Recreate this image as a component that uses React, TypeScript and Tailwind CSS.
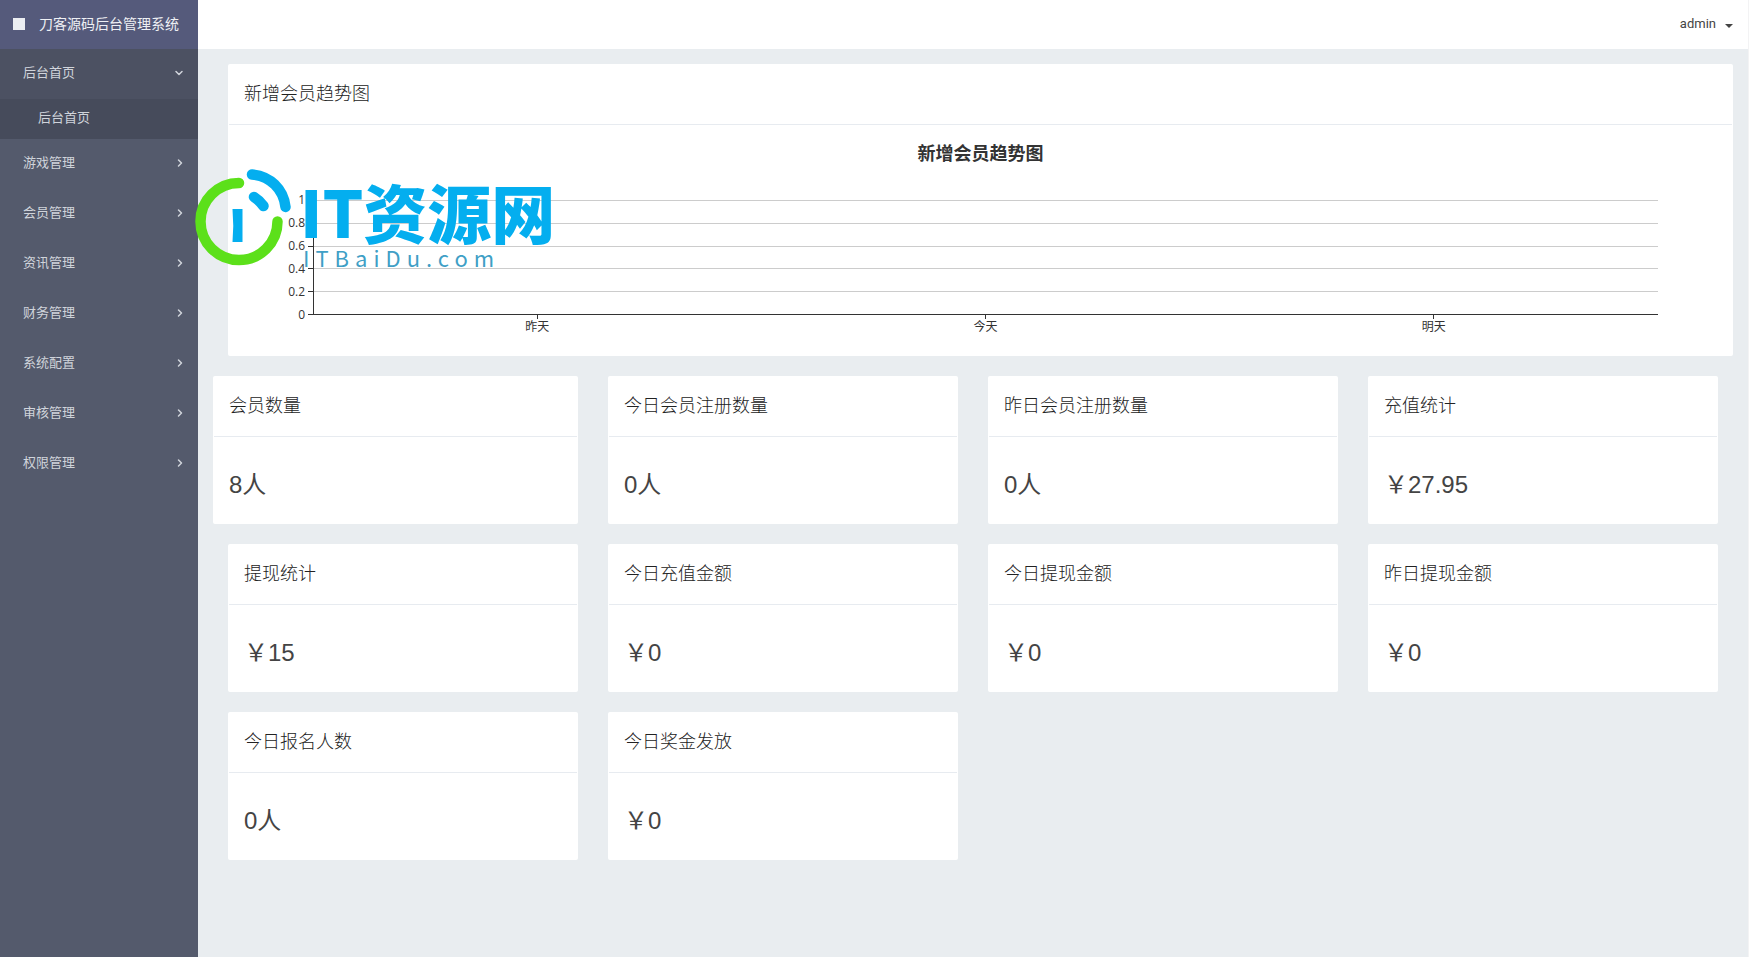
import { ChevronDown, ChevronRight } from "lucide-react";

const menu = ["游戏管理", "会员管理", "资讯管理", "财务管理", "系统配置", "审核管理", "权限管理"];

const stats = [
  { title: "会员数量", value: "8人" },
  { title: "今日会员注册数量", value: "0人" },
  { title: "昨日会员注册数量", value: "0人" },
  { title: "充值统计", value: "￥27.95" },
  { title: "提现统计", value: "￥15" },
  { title: "今日充值金额", value: "￥0" },
  { title: "今日提现金额", value: "￥0" },
  { title: "昨日提现金额", value: "￥0" },
  { title: "今日报名人数", value: "0人" },
  { title: "今日奖金发放", value: "￥0" },
];

const levels = ["1", "0.8", "0.6", "0.4", "0.2", "0"];
const days = ["昨天", "今天", "明天"];

function Sidebar() {
  return (
    <aside className="w-[198px] shrink-0 bg-[#545a6c] text-[13px] text-[#d0d4db]">
      <a href="#home" className="flex h-[49px] items-center gap-[14px] bg-[#555a7b] pb-0.5 pl-[13px] text-sm text-[#eef0f4]">
        <span className="size-3 bg-[#eceef2]" />
        刀客源码后台管理系统
      </a>
      <nav>
        <button type="button" className="flex h-[50px] w-full items-center justify-between bg-[#4c5162] pr-[13px] pb-0.5 pl-[23px]">
          后台首页
          <ChevronDown className="size-3" strokeWidth={3} />
        </button>
        <a href="#dashboard" className="flex h-10 items-center bg-[#464b5b] pb-0.5 pl-[38px]">
          后台首页
        </a>
        {menu.map((label) => (
          <button key={label} type="button" className="flex h-[50px] w-full items-center justify-between pr-3 pb-0.5 pl-[23px]">
            {label}
            <ChevronRight className="size-3" strokeWidth={3} />
          </button>
        ))}
      </nav>
    </aside>
  );
}

function Logo() {
  return (
    <div className="pointer-events-none absolute top-24 left-[-38px] flex items-start font-['Noto_Sans_CJK_SC',sans-serif]">
      <svg viewBox="0 0 110 112" className="h-[112px] w-[110px] shrink-0" fill="none" strokeWidth="10.500" strokeLinecap="round">
        <path d="M49 23 A38.500 38.500 0 1 0 87.500 61.500" stroke="#5ce01a" />
        <path d="M62 14.500 C80 16 93.500 29 95.500 47" stroke="#04aeef" />
        <path d="M64 37 Q69 40 73.500 46" stroke="#04aeef" />
        <path d="M42.500 49 H52.500 V82 H42.500 Q44 66 42.500 49 Z" fill="#04aeef" />
      </svg>
      <div className="pt-[18px] whitespace-nowrap">
        <p className="text-[64px] leading-[64px] font-black text-[#04aeef]">IT资源网</p>
        <p className="mt-[3px] pl-[3px] text-[22px] leading-6 tracking-[6px] text-[#3f9fc6]">ITBaiDu.com</p>
      </div>
    </div>
  );
}

function TrendChart() {
  return (
    <figure className="px-[15px] pt-[17px] pb-[21px] text-[#333]">
      <figcaption className="text-center text-lg leading-6 font-bold">新增会员趋势图</figcaption>
      <div className="mt-[34px] mr-[60px] flex text-xs">
        <div className="-my-2 flex w-[62px] flex-col justify-between text-right font-['Open_Sans',sans-serif] leading-4">
          {levels.map((level) => (
            <span key={level}>{level}</span>
          ))}
        </div>
        <div className="ml-[3px] flex w-[5px] flex-col justify-between">
          {levels.map((level) => (
            <span key={level} className="h-px bg-[#333]" />
          ))}
        </div>
        <div className="flex h-[115px] flex-1 flex-col justify-between border-l border-[#333]">
          {levels.map((level) => (
            <span key={level} className={level === "0" ? "h-px bg-[#333]" : "h-px bg-[#ccc]"} />
          ))}
        </div>
      </div>
      <div className="mr-[60px] ml-[70px] grid grid-cols-3 text-xs leading-4">
        {days.map((day) => (
          <div key={day} className="flex flex-col items-center">
            <span className="h-1 w-px bg-[#333]" />
            {day}
          </div>
        ))}
      </div>
    </figure>
  );
}

export default function App() {
  return (
    <div className="flex min-h-screen bg-[#e9edf0] font-['Liberation_Sans','Noto_Sans_CJK_SC',sans-serif] text-[#444]">
      <Sidebar />
      <div className="min-w-0 flex-1 border-r border-[#f3f3f4]">
        <header className="flex h-[49px] items-center justify-end bg-white pr-[15px] pb-0.5">
          <button type="button" className="flex items-center gap-[9px] font-[Roboto,sans-serif] text-[13px]">
            admin
            <svg viewBox="0 0 8 4" className="mt-1 h-1 w-2" fill="currentColor">
              <path d="M0 0H8L4 4Z" />
            </svg>
          </button>
        </header>
        <main className="p-[15px]">
          <section className="relative ml-[15px] rounded-xs bg-white">
            <h2 className="mx-px flex h-[61px] items-center border-b border-[#e7ebf0] px-[15px] text-lg font-light text-[#222]">新增会员趋势图</h2>
            <TrendChart />
            <Logo />
          </section>
          <div className="mt-5 mr-[15px] grid grid-cols-4 gap-x-[30px] gap-y-5 pl-[15px]">
            {stats.map((stat, index) => (
              <section key={stat.title} className={index === 0 ? "-ml-[15px] rounded-xs bg-white" : "rounded-xs bg-white"}>
                <h2 className="mx-px flex h-[61px] items-center border-b border-[#e7ebf0] px-[15px] text-lg font-light text-[#222]">{stat.title}</h2>
                <p className="flex h-[87px] items-center px-4 pt-[9px] text-2xl">{stat.value}</p>
              </section>
            ))}
          </div>
        </main>
      </div>
    </div>
  );
}
